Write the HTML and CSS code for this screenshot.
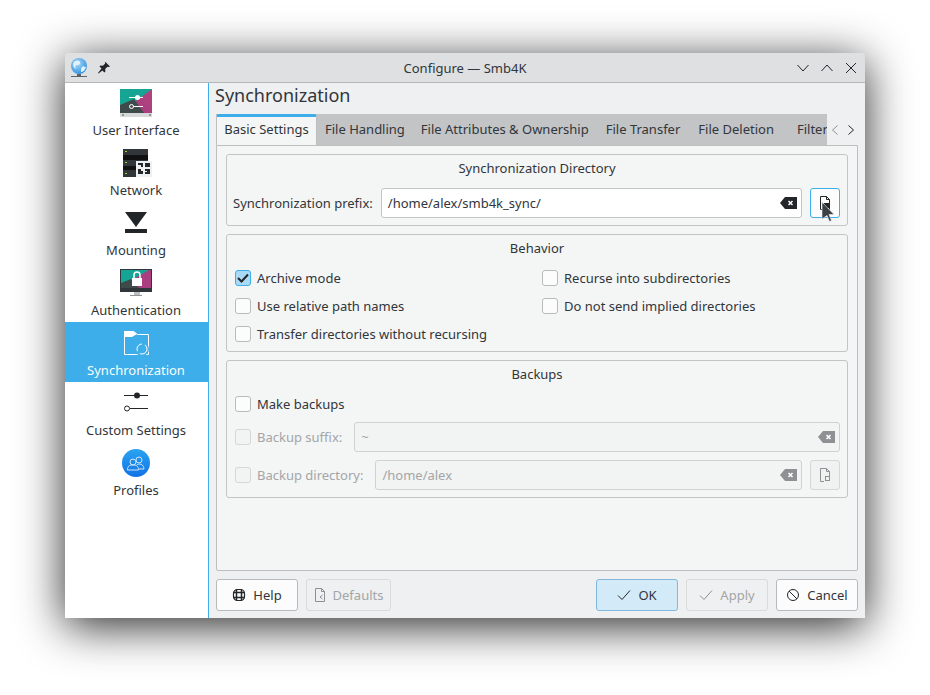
FILE: index.html
```html
<!DOCTYPE html>
<html lang="en">

<head>
    <meta charset="UTF-8">
    <title>Configure — Smb4K</title>
    <link rel="stylesheet" href="styles.css">
</head>

<body>
    <div class="window">
        <div class="titlebar">
            <div class="title-left">
                <svg width="18" height="20" viewBox="0 0 18 20">
                    <defs>
                        <radialGradient id="globe" cx="0.4" cy="0.35" r="0.7">
                            <stop offset="0" stop-color="#a9dcf8" />
                            <stop offset="1" stop-color="#2f8fe0" />
                        </radialGradient>
                    </defs>
                    <circle cx="9" cy="8" r="8" fill="url(#globe)" />
                    <path d="M4 4c2-2 5-2 6 0s-1 3-3 3-2 2-1 4C4 10 2 7 4 4zM12 9c2-1 3 0 4 0-1 3-3 5-5 5 0-2 0-4 1-5z" fill="#e4f3fb" />
                    <rect x="7" y="16" width="4" height="2" fill="#5d6468" />
                    <rect x="1" y="18" width="16" height="1" fill="#5d6468" />
                </svg>
                <svg class="pin" width="14" height="14" viewBox="0 0 14 14">
                    <path d="M8.500 1l4.500 4.500-1.200.6-1.300-.3-2.300 2.300.2 2.400-1 1-2-2L1.500 12.500 1 12l3.500-4.400-2-2 1-1 2.400.2 2.300-2.300-.3-1.300z" fill="#232629" />
                </svg>
            </div>
            <div class="title-text">Configure — Smb4K</div>
            <div class="title-buttons">
                <svg width="14" height="14" viewBox="0 0 14 14"><path d="M1.500 4l5.500 6 5.500-6" class="line" /></svg>
                <svg width="14" height="14" viewBox="0 0 14 14"><path d="M1.500 10l5.500-6 5.500 6" class="line" /></svg>
                <svg width="14" height="14" viewBox="0 0 14 14"><path d="M2 2l10 10M12 2L2 12" class="line" /></svg>
            </div>
        </div>

        <div class="body-row">
            <div class="sidebar">
                <div class="side-item">
                    <svg width="32" height="28" viewBox="0 0 32 28">
                        <defs>
                            <linearGradient id="pinkbg" x1="0" y1="1" x2="1" y2="0">
                                <stop offset="0" stop-color="#a13d83" />
                                <stop offset="1" stop-color="#b5427c" />
                            </linearGradient>
                        </defs>
                        <rect width="32" height="24" fill="url(#pinkbg)" />
                        <path d="M0 0h32L0 24z" fill="#16a594" />
                        <path d="M0 24V16L14 10 24 24z" fill="#3f4a4a" />
                        <rect y="24" width="32" height="4" fill="#d8d9da" />
                        <path d="M2 25.500h2v1H2zM29 25.500h2v1h-2z" fill="#555" />
                        <path d="M9 8.500h14M12 17.500h11" stroke="#fff" stroke-width="1" />
                        <circle cx="17.500" cy="8.500" r="2.500" fill="#fff" />
                        <circle cx="11.500" cy="17.500" r="2" fill="#555" stroke="#fff" />
                    </svg>
                    <span>User Interface</span>
                </div>
                <div class="side-item">
                    <svg width="32" height="28" viewBox="0 0 32 28">
                        <rect x="3" width="25" height="28" fill="#31363b" />
                        <rect x="3" y="6" width="25" height="5" fill="#111" />
                        <rect x="3" y="17" width="25" height="4" fill="#111" />
                        <path d="M5 2.500h2M5 13.500h2M5 24.500h2" stroke="#9bd22f" />
                        <rect x="16" y="12" width="16" height="16" fill="#eff0f1" />
                        <path d="M18 14h5v4h-2v-2h-3zM25 14h5v4h-5zM18 20h3v2h2v3h-5zM25 20h5v5h-5v-2h2v-1h-2z" fill="#232629" />
                    </svg>
                    <span>Network</span>
                </div>
                <div class="side-item">
                    <svg width="32" height="28" viewBox="0 0 32 28">
                        <path d="M5 3h22L16 18z" fill="#232629" />
                        <rect x="5" y="20" width="22" height="4" fill="#232629" />
                    </svg>
                    <span>Mounting</span>
                </div>
                <div class="side-item">
                    <svg width="32" height="28" viewBox="0 0 32 28">
                        <rect width="32" height="23" fill="#31363b" />
                        <rect x="1" y="1" width="30" height="18" fill="#a93f80" />
                        <path d="M1 1h28L1 17z" fill="#16a594" />
                        <path d="M1 19v-5l10-4 8 9z" fill="#3f4a4a" />
                        <rect x="12" y="9" width="10" height="8" fill="#fff" />
                        <path d="M14 9V6a3 3 0 0 1 6 0v3" fill="none" stroke="#fff" stroke-width="1.500" />
                        <rect x="14" y="23" width="6" height="3" fill="#bcc0c2" />
                        <rect x="10" y="26" width="12" height="1" fill="#8f9598" />
                    </svg>
                    <span>Authentication</span>
                </div>
                <div class="side-item active">
                    <svg width="32" height="28" viewBox="0 0 32 28">
                        <path d="M4.500 2.500h9l4 3h11v20h-24z" fill="none" stroke="#fff" />
                        <path d="M4 2h9l4 3-5 3H4z" fill="#fff" />
                        <circle cx="22" cy="20" r="7" fill="#3daee9" />
                        <circle cx="22" cy="20" r="5" fill="none" stroke="#fff" stroke-dasharray="10 3" />
                    </svg>
                    <span>Synchronization</span>
                </div>
                <div class="side-item">
                    <svg width="32" height="28" viewBox="0 0 32 28">
                        <path d="M4 6.500h24M10 19.500h18" stroke="#232629" />
                        <circle cx="17" cy="6.500" r="3" fill="#232629" />
                        <circle cx="7" cy="19.500" r="2.500" fill="#fff" stroke="#232629" />
                    </svg>
                    <span>Custom Settings</span>
                </div>
                <div class="side-item">
                    <svg width="32" height="28" viewBox="0 0 32 28">
                        <defs>
                            <linearGradient id="blue" x1="0" y1="0" x2="0" y2="1">
                                <stop offset="0" stop-color="#2aa4f0" />
                                <stop offset="1" stop-color="#1272e6" />
                            </linearGradient>
                        </defs>
                        <circle cx="16" cy="14" r="14" fill="url(#blue)" />
                        <g fill="none" stroke="#cfe7fb" stroke-width="1">
                            <circle cx="13" cy="13" r="3" />
                            <circle cx="19" cy="11" r="3" />
                            <path d="M7.500 21c0-4 2-5 5.500-5s5.500 1 5.500 5zM17 15.500c4-1 6.500 0 7 4.500h-5" />
                        </g>
                    </svg>
                    <span>Profiles</span>
                </div>
            </div>

            <div class="main">
                <h1 class="page-title">Synchronization</h1>

                <div class="tabs-row">
                    <div class="tabs">
                        <div class="tab current">Basic Settings</div>
                        <div class="tab">File Handling</div>
                        <div class="tab wide">File Attributes &amp; Ownership</div>
                        <div class="tab wider">File Transfer</div>
                        <div class="tab">File Deletion</div>
                        <div class="tab clipped">Filter</div>
                    </div>
                    <div class="tab-arrows">
                        <svg width="10" height="12" viewBox="0 0 10 12"><path d="M7.500 1.500L2.500 6l5 4.500" class="line faint" /></svg>
                        <svg width="10" height="12" viewBox="0 0 10 12"><path d="M2.500 1.500L7.500 6l-5 4.500" class="line" /></svg>
                    </div>
                </div>

                <div class="tab-panel">
                    <div class="group first">
                        <div class="group-title">Synchronization Directory</div>
                        <div class="field-row">
                            <label>Synchronization prefix:</label>
                            <div class="input">
                                <span>/home/alex/smb4k_sync/</span>
                                <svg width="17" height="12" viewBox="0 0 17 12"><path d="M5 0h12v12H5L0 6z" fill="#232629" /><path d="M8.500 4l4 4M12.500 4l-4 4" stroke="#fff" stroke-width="1.500" /></svg>
                            </div>
                            <div class="file-btn hover">
                                <svg width="12" height="14" viewBox="0 0 12 14"><path d="M1.500.500h6l3 3v10h-9zM7.500.500v3h3" class="line" /><rect x="5" y="7" width="5" height="5" fill="#232629" /></svg>
                                <svg class="cursor" width="14" height="20" viewBox="0 0 14 20"><path d="M1 0l12 12.500H8l2.500 6-2 1-2.500-6L1 17z" fill="#3b4045" stroke="#eff0f1" stroke-width=".6" /></svg>
                            </div>
                        </div>
                    </div>

                    <div class="group behavior">
                        <div class="group-title">Behavior</div>
                        <div class="check-grid">
                            <div class="check-item">
                                <span class="box checked"><svg width="12" height="10" viewBox="0 0 12 10"><path d="M1 5l3.500 3.500L11 1.500" fill="none" stroke="#232629" stroke-width="2" /></svg></span>
                                Archive mode
                            </div>
                            <div class="check-item"><span class="box"></span>Recurse into subdirectories</div>
                            <div class="check-item"><span class="box"></span>Use relative path names</div>
                            <div class="check-item"><span class="box"></span>Do not send implied directories</div>
                            <div class="check-item"><span class="box"></span>Transfer directories without recursing</div>
                        </div>
                    </div>

                    <div class="group">
                        <div class="group-title">Backups</div>
                        <div class="check-item single"><span class="box"></span>Make backups</div>
                        <div class="field-row disabled suffix-row">
                            <span class="box"></span>
                            <label>Backup suffix:</label>
                            <div class="input">
                                <span>~</span>
                                <svg width="17" height="12" viewBox="0 0 17 12"><path d="M5 0h12v12H5L0 6z" fill="#8e9194" /><path d="M8.500 4l4 4M12.500 4l-4 4" stroke="#fff" stroke-width="1.500" /></svg>
                            </div>
                        </div>
                        <div class="field-row disabled">
                            <span class="box"></span>
                            <label>Backup directory:</label>
                            <div class="input">
                                <span>/home/alex</span>
                                <svg width="17" height="12" viewBox="0 0 17 12"><path d="M5 0h12v12H5L0 6z" fill="#8e9194" /><path d="M8.500 4l4 4M12.500 4l-4 4" stroke="#fff" stroke-width="1.500" /></svg>
                            </div>
                            <div class="file-btn">
                                <svg width="12" height="14" viewBox="0 0 12 14"><path d="M5 13.500H1.500V.500h6l3 3V8M7.500.500v3h3" class="line faint" /><rect x="6.500" y="8.500" width="4" height="4" fill="none" stroke="#8e9194" /></svg>
                            </div>
                        </div>
                    </div>
                </div>

                <div class="footer">
                    <div class="btn-set">
                        <div class="btn">
                            <svg width="14" height="14" viewBox="0 0 14 14"><rect x="1.500" y="1.500" width="11" height="11" rx="4" fill="none" stroke="#232629" stroke-width="1.200" /><path d="M1.500 4.500h11M1.500 9.500h11M4.500 1.500v11M9.500 1.500v11" stroke="#232629" stroke-width="1.500" /></svg>
                            Help
                        </div>
                        <div class="btn off defaults">
                            <svg width="12" height="14" viewBox="0 0 12 14"><path d="M1.500 13.500V.500h6l3 3v10zM7.500.500v3h3" class="line faint" /><path d="M8.500 7L6 9l2.500 2" class="line faint" /></svg>
                            Defaults
                        </div>
                    </div>
                    <div class="btn-set">
                        <div class="btn primary">
                            <svg width="14" height="12" viewBox="0 0 14 12"><path d="M1 6.500L5 10.500 13 1.500" class="line" /></svg>
                            OK
                        </div>
                        <div class="btn off">
                            <svg width="14" height="12" viewBox="0 0 14 12"><path d="M1 6.500L5 10.500 13 1.500" class="line faint" /></svg>
                            Apply
                        </div>
                        <div class="btn">
                            <svg width="14" height="14" viewBox="0 0 14 14"><circle cx="7" cy="7" r="5.500" class="line" /><path d="M3 3l8 8" class="line" /></svg>
                            Cancel
                        </div>
                    </div>
                </div>
            </div>
        </div>
    </div>
</body>

</html>
```

FILE: styles.css
```css
* {
    box-sizing: border-box;
    margin: 0;
    padding: 0;
}

body {
    font-family: "Noto Sans", sans-serif;
    font-size: 13px;
    color: #31363b;
    background-color: #fff;
    padding: 53px 0 0 65px;
    overflow: hidden;
    height: 695px;
}

.line {
    fill: none;
    stroke: #232629;
    stroke-width: 1;
}

.line.faint {
    stroke: #8e9194;
}

/* Window frame */
.window {
    width: 800px;
    height: 565px;
    background-color: #eff0f1;
    border-radius: 4px 4px 0 0;
    box-shadow: 0 8px 46px rgba(0, 0, 0, 0.85);
    display: flex;
    flex-direction: column;
}

.titlebar {
    height: 29px;
    flex: none;
    display: flex;
    align-items: center;
    justify-content: space-between;
    position: relative;
    z-index: 1;
    background-color: #dee0e2;
    box-shadow: 0 1px 0 #b4b6b8;
    border-radius: 4px 4px 0 0;
    padding: 1px 7px 0 5px;
}

.title-left {
    display: flex;
    align-items: center;
    gap: 9px;
}

.title-text {
    position: absolute;
    left: 0;
    right: 0;
    text-align: center;
    pointer-events: none;
}

.title-buttons {
    display: flex;
    gap: 10px;
}

.body-row {
    flex: 1;
    display: flex;
    min-height: 0;
}

/* Left page list */
.sidebar {
    width: 144px;
    flex: none;
    background-color: #fff;
    border-right: 1px solid #3daee9;
}

.side-item {
    height: 60px;
    display: flex;
    flex-direction: column;
    align-items: center;
    padding: 7px 1px 0 0;
    gap: 4px;
}

.side-item svg {
    flex: none;
}

.side-item span {
    line-height: 18px;
}

.side-item.active {
    background-color: #3daee9;
    color: #fcfcfc;
}

/* Right side */
.main {
    flex: 1;
    min-width: 0;
    padding: 0 7px 7px 7px;
    display: flex;
    flex-direction: column;
}

.page-title {
    font-size: 18px;
    font-weight: normal;
    line-height: 26px;
    margin-left: -1px;
    height: 32px;
    flex: none;
}

.tabs-row {
    display: flex;
    height: 32px;
    flex: none;
}

.tabs {
    flex: 1;
    min-width: 0;
    display: flex;
    overflow: hidden;
    background-color: #c3c4c6;
    white-space: nowrap;
    height: 31px;
}

.tab {
    padding: 0 8px;
    line-height: 30px;
    flex: none;
}

.tab.wide {
    padding-right: 9px;
}

.tab.wider {
    padding-right: 10px;
}

.tab.clipped {
    margin-left: 7px;
}

.tab.current {
    width: 101px;
    padding: 0;
    text-align: center;
    background-color: #f4f5f5;
    border: 1px solid #bcbec0;
    border-top: 3px solid #3daee9;
    border-bottom: none;
    border-radius: 3px 3px 0 0;
    line-height: 25px;
    height: 32px;
}

.tab-arrows {
    width: 31px;
    flex: none;
    display: flex;
    align-items: center;
    justify-content: space-between;
    padding: 0 2px 1px 3px;
}

.tab-panel {
    height: 426px;
    flex: none;
    margin-top: -1px;
    background-color: #f4f5f5;
    border: 1px solid #bcbec0;
    border-radius: 0 0 2px 2px;
    padding: 8px 9px 0;
    display: flex;
    flex-direction: column;
    gap: 8px;
}

.group {
    border: 1px solid #c2c4c5;
    border-radius: 3px;
    padding: 0 7px 7px 8px;
    flex: none;
}

.group.first {
    height: 72px;
}

.group.behavior {
    padding-bottom: 3px;
}

.group-title {
    height: 28px;
    line-height: 27px;
    text-align: center;
    margin-left: -1px;
}

.field-row {
    display: flex;
    align-items: center;
    height: 30px;
    margin-top: 5px;
    gap: 8px;
}

.group.first .field-row {
    margin-top: 5px;
    margin-left: -2px;
}

.input {
    flex: 1;
    height: 30px;
    background-color: #fff;
    border: 1px solid #c2c4c5;
    border-radius: 3px;
    display: flex;
    align-items: center;
    justify-content: space-between;
    padding: 0 4px 0 6px;
}

.file-btn {
    width: 30px;
    height: 30px;
    flex: none;
    display: flex;
    align-items: center;
    justify-content: center;
    position: relative;
    border: 1px solid #c2c4c5;
    border-radius: 3px;
}

.file-btn.hover {
    border-color: #3daee9;
    background-color: #fcfcfc;
}

.cursor {
    position: absolute;
    left: 10px;
    top: 13px;
}

/* Checkboxes */
.box {
    width: 16px;
    height: 16px;
    flex: none;
    display: flex;
    align-items: center;
    justify-content: center;
    background-color: #fcfcfc;
    border: 1px solid #b8babc;
    border-radius: 3px;
}

.box.checked {
    background-color: #a9daf5;
    border-color: #3daee9;
}

.check-item {
    height: 28px;
    display: flex;
    align-items: center;
    gap: 6px;
}

.check-item.single {
    margin-top: 1px;
}

.check-grid {
    display: grid;
    grid-template-columns: 307px 1fr;
    margin-top: 1px;
}

.field-row.suffix-row {
    margin-top: 4px;
}

.suffix-row + .field-row {
    margin-top: 8px;
}

.disabled {
    color: #a3a5a7;
}

.disabled .box {
    background-color: #f2f3f3;
    border-color: #d5d6d7;
}

.disabled .input {
    background-color: #f2f3f3;
    border-color: #d0d1d2;
}

.disabled .file-btn {
    background-color: #f0f1f1;
    border-color: #d5d6d7;
}

.disabled label {
    margin-left: -2px;
    margin-right: 4px;
}

/* Button row */
.footer {
    display: flex;
    justify-content: space-between;
    margin-top: 8px;
}

.btn-set {
    display: flex;
    gap: 8px;
}

.btn {
    width: 82px;
    height: 32px;
    flex: none;
    display: flex;
    align-items: center;
    justify-content: center;
    gap: 7px;
    background-color: #fcfcfc;
    border: 1px solid #b8babc;
    border-radius: 3px;
}

.btn.primary {
    background-color: #d3eaf8;
    border-color: #7fb8da;
}

.btn.off {
    background-color: #eff0f1;
    border-color: #d9dadb;
    color: #a3a5a7;
}

.btn.defaults {
    width: 85px;
}
```
